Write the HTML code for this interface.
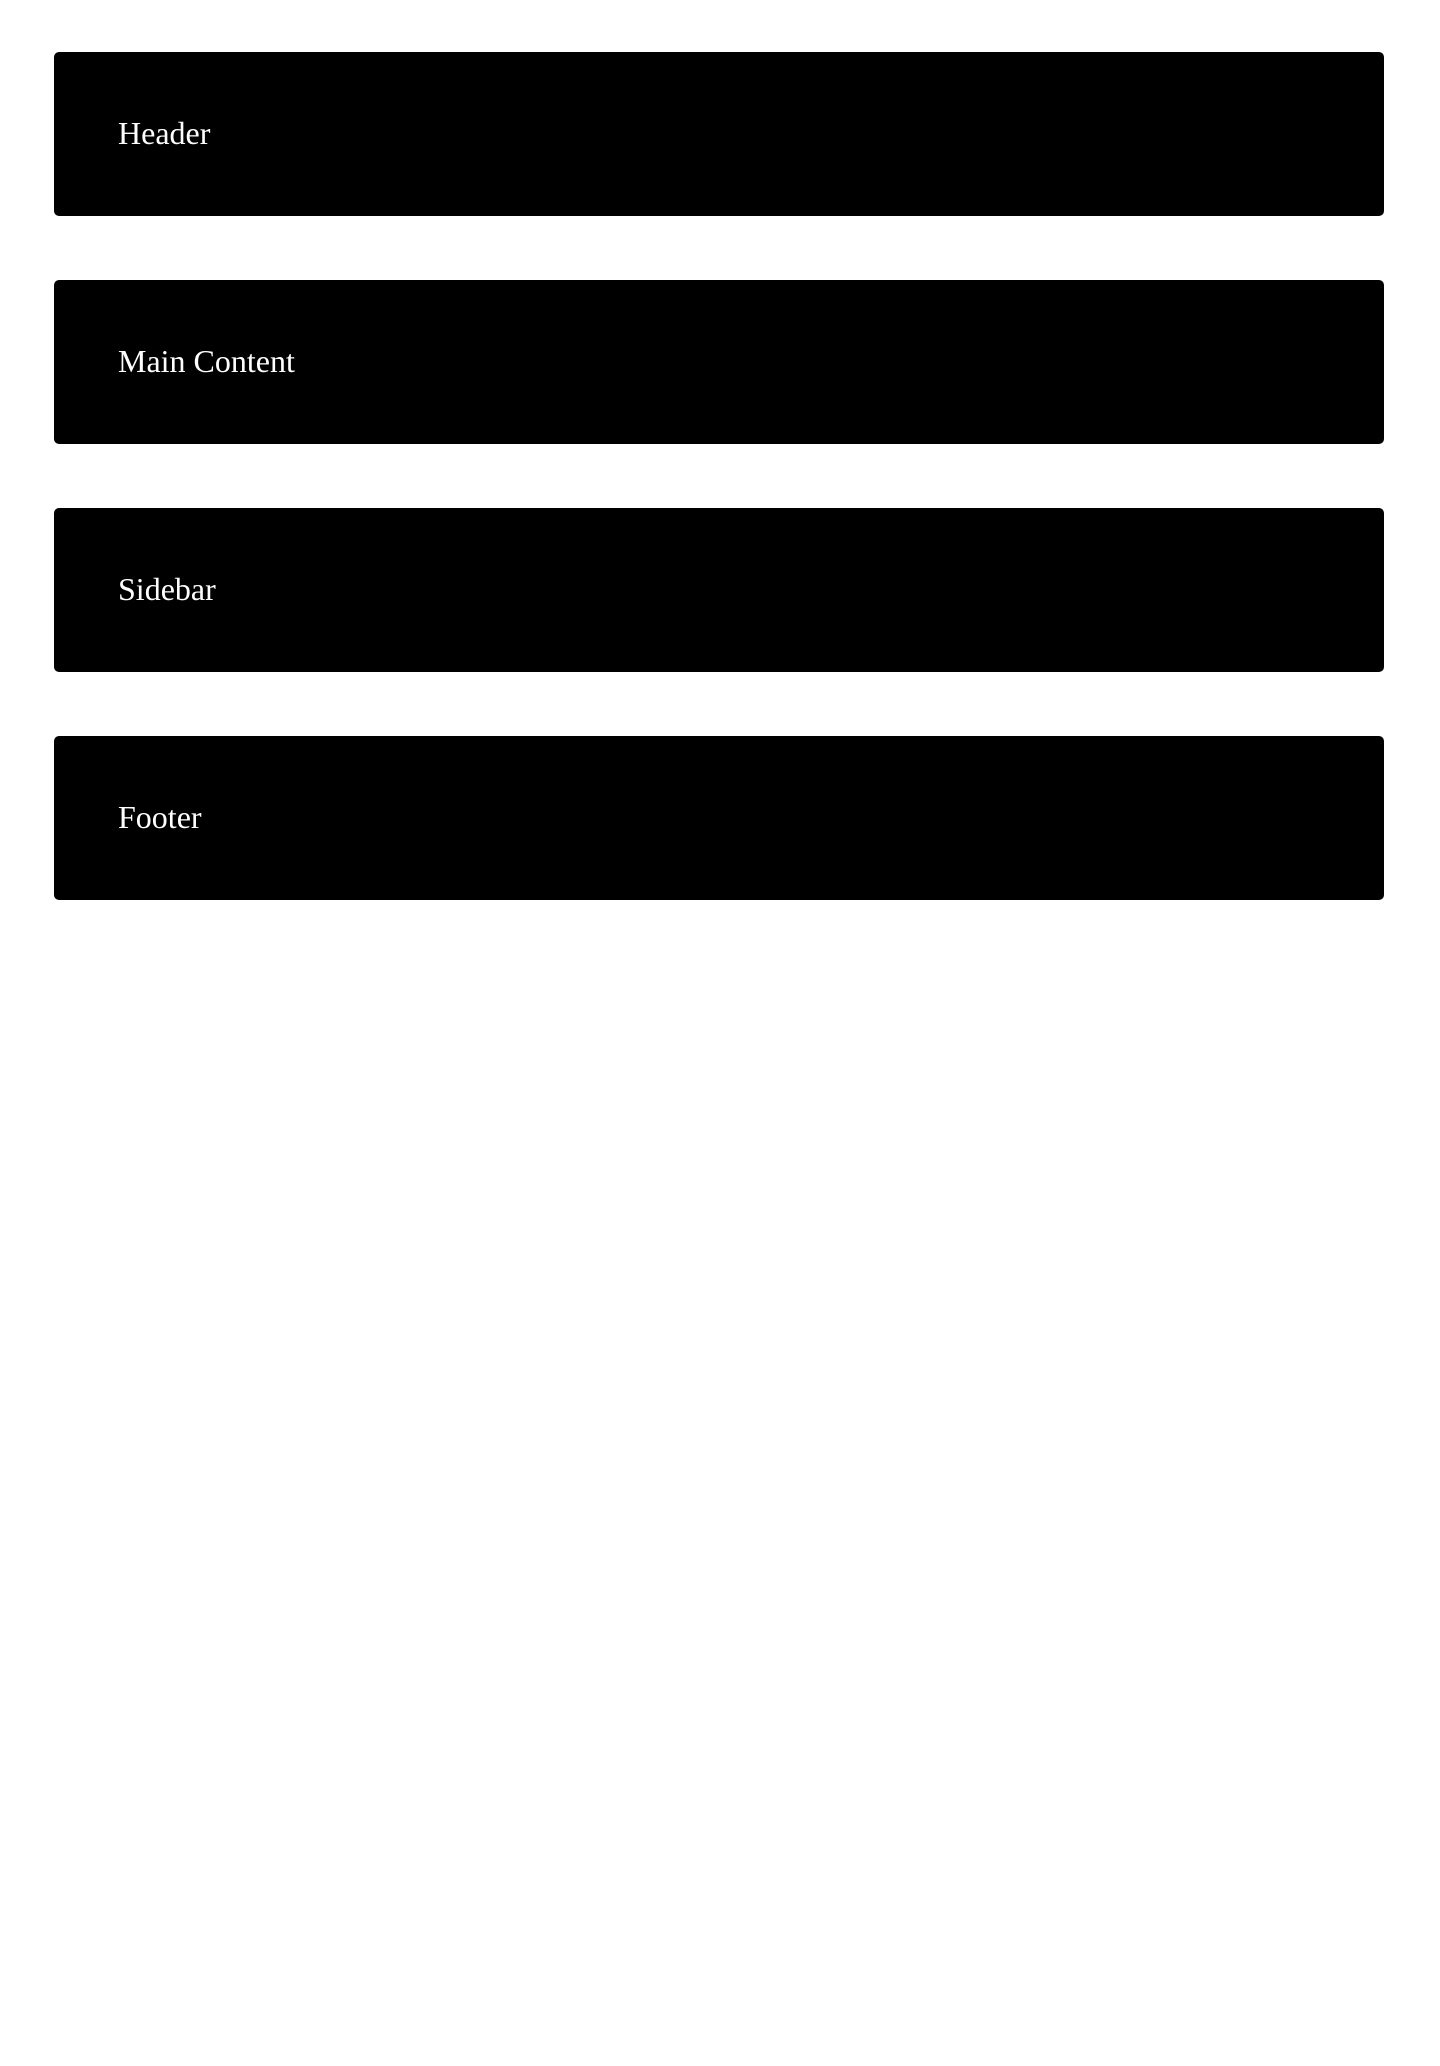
<!DOCTYPE html>
<html><head><meta charset="utf-8"><style>
html,body{margin:0;padding:0;background:#fff;width:1440px;height:2066px;overflow:hidden}
.b{position:absolute;left:54px;width:1330px;height:164px;background:#000;border-radius:5px;box-sizing:border-box;padding:63px 64px;color:#fff;font-family:"Liberation Serif",serif;font-size:32px;line-height:36px}
</style></head><body>
<div class="b" style="top:52px">Header</div>
<div class="b" style="top:280px">Main Content</div>
<div class="b" style="top:508px">Sidebar</div>
<div class="b" style="top:736px">Footer</div>
</body></html>
